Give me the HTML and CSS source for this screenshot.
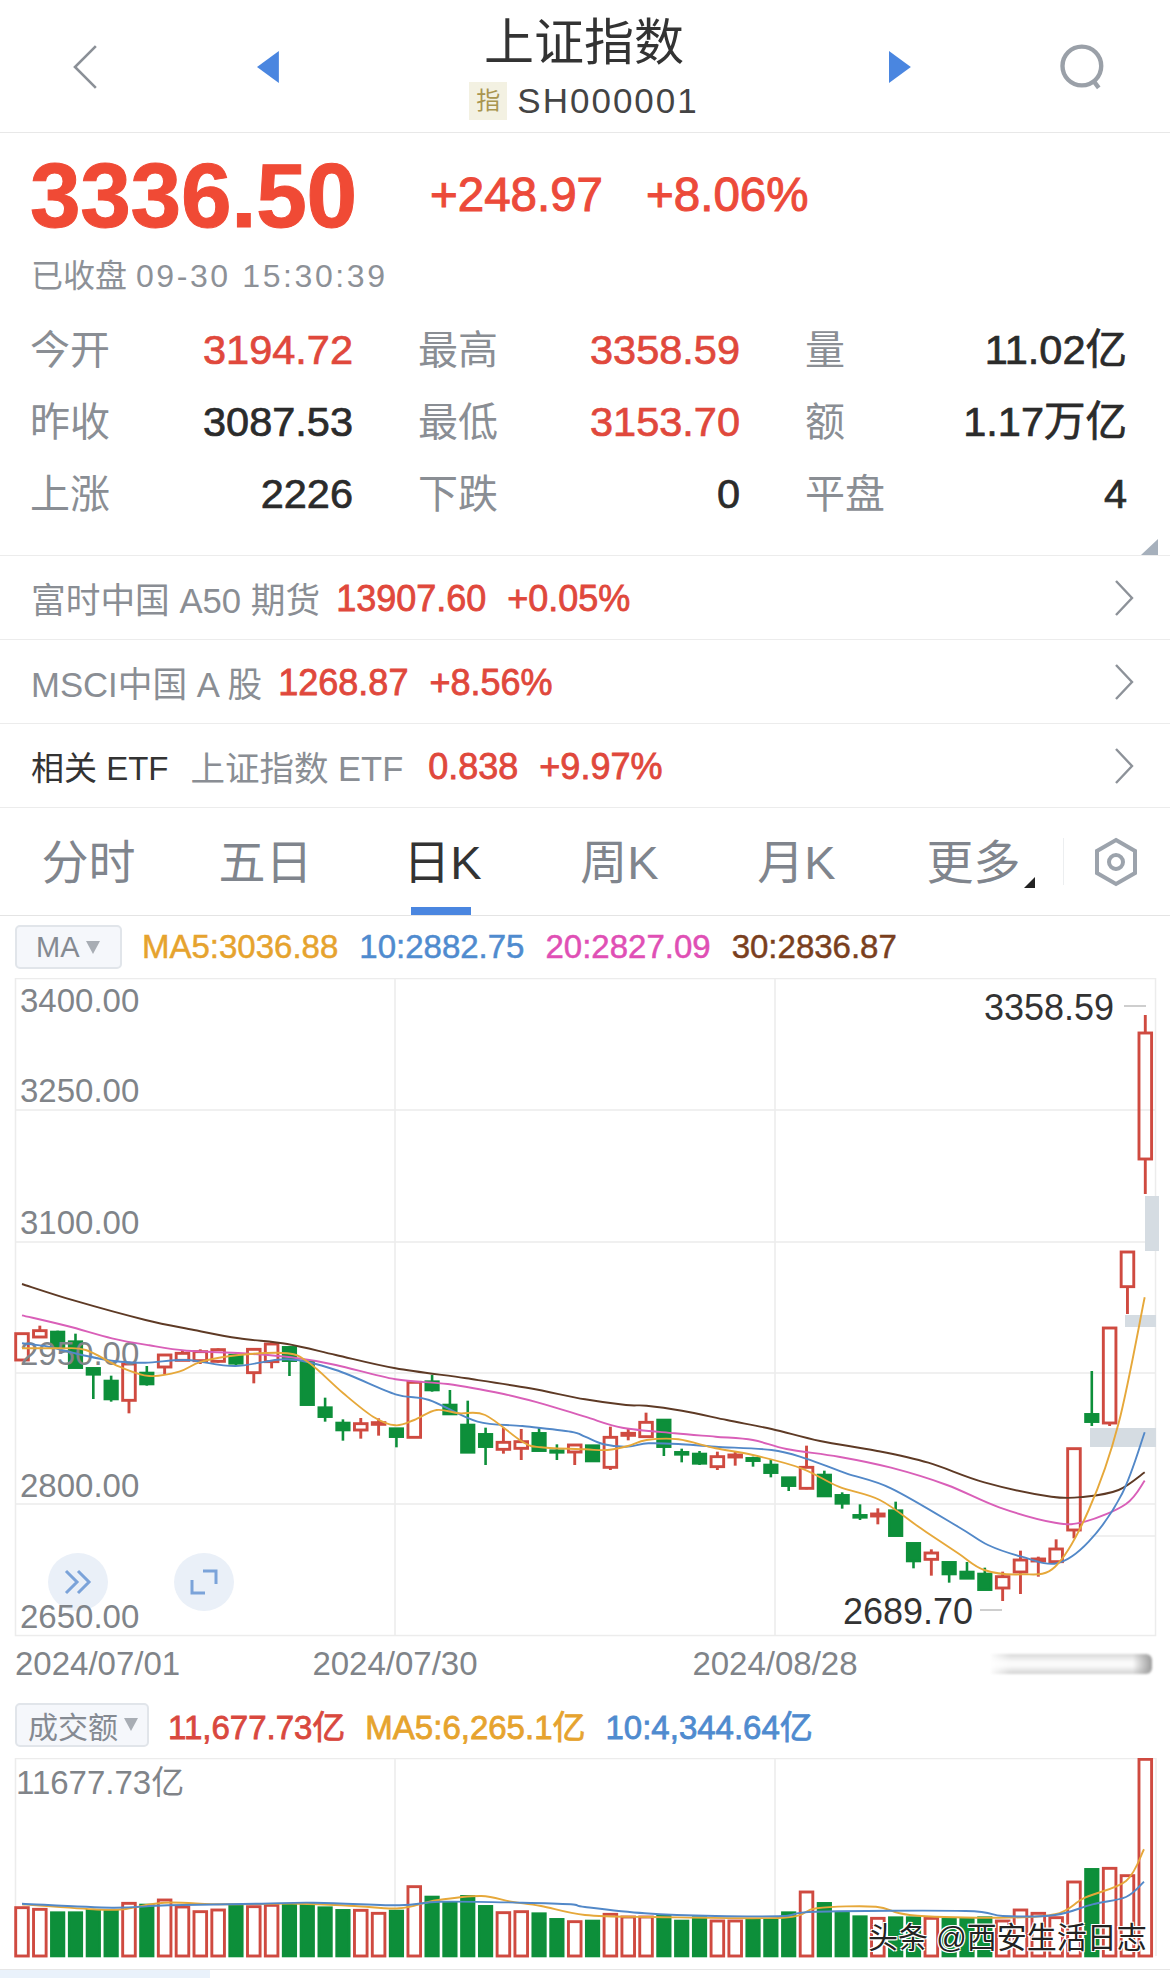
FILE: index.html
```html
<!DOCTYPE html>
<html lang="zh-CN">
<head>
<meta charset="utf-8">
<title>上证指数</title>
<link rel="stylesheet" href="styles.css">
</head>
<body>
<div class="page">
  <header class="header">
    <svg class="ic-back" viewBox="0 0 26 46"><path d="M24 2 3 23l21 21"/></svg>
    <svg class="ic-arrow" viewBox="0 0 22 32"><path d="M22 0v32L0 16z"/></svg>
    <div class="title-box">
      <div class="title">上证指数</div>
      <div class="code"><span class="tag">指</span><span class="code-text">SH000001</span></div>
    </div>
    <svg class="ic-arrow" viewBox="0 0 22 32"><path d="M0 0v32l22-16z"/></svg>
    <svg class="ic-search" viewBox="0 0 44 46"><circle cx="22" cy="22" r="19.5"/><path d="m33 36 6 8"/></svg>
  </header>

  <section class="quote">
    <div class="price-line">
      <span class="price">3336.50</span>
      <span class="chg">+248.97</span>
      <span class="chg">+8.06%</span>
    </div>
    <div class="status">已收盘 <span class="status-time">09-30 15:30:39</span></div>
    <div class="stats">
      <span class="lab">今开</span><span class="val up">3194.72</span>
      <span class="lab">最高</span><span class="val up">3358.59</span>
      <span class="lab">量</span><span class="val">11.02亿</span>
      <span class="lab">昨收</span><span class="val">3087.53</span>
      <span class="lab">最低</span><span class="val up">3153.70</span>
      <span class="lab">额</span><span class="val">1.17万亿</span>
      <span class="lab">上涨</span><span class="val">2226</span>
      <span class="lab">下跌</span><span class="val">0</span>
      <span class="lab">平盘</span><span class="val">4</span>
    </div>
    <span class="corner"></span>
  </section>

  <div class="row">
    <span class="row-name">富时中国 A50 期货</span><span class="row-num">13907.60</span><span class="row-num">+0.05%</span>
    <svg class="ic-next" viewBox="0 0 20 36"><path d="m2 1 16 17L2 35"/></svg>
  </div>
  <div class="row">
    <span class="row-name">MSCI中国 A 股</span><span class="row-num">1268.87</span><span class="row-num">+8.56%</span>
    <svg class="ic-next" viewBox="0 0 20 36"><path d="m2 1 16 17L2 35"/></svg>
  </div>
  <div class="row">
    <span class="row-head">相关 ETF</span><span class="row-name row-name-wide">上证指数 ETF</span><span class="row-num">0.838</span><span class="row-num">+9.97%</span>
    <svg class="ic-next" viewBox="0 0 20 36"><path d="m2 1 16 17L2 35"/></svg>
  </div>

  <nav class="tabs">
    <div class="tab">分时</div>
    <div class="tab">五日</div>
    <div class="tab active">日K</div>
    <div class="tab">周K</div>
    <div class="tab">月K</div>
    <div class="tab more">更多<span class="more-mark"></span></div>
    <div class="tab-set">
      <svg class="ic-hex" viewBox="0 0 44 50"><path d="M22 3 41 14v22L22 47 3 36V14z"/><circle cx="22" cy="25" r="7"/></svg>
    </div>
  </nav>

  <div class="legend legend-ma">
    <span class="pill pill-ma">MA<i class="pill-mark"></i></span>
    <span class="c-or">MA5:3036.88</span>
    <span class="c-bl">10:2882.75</span>
    <span class="c-pk">20:2827.09</span>
    <span class="c-br">30:2836.87</span>
  </div>

  <svg class="chart-k" viewBox="0 978 1170 659">
    <g class="grid">
      <rect x="15.5" y="978.5" width="1140" height="657"/>
      <path d="M15 1110h1141M15 1242h1141M15 1373h1141M15 1504h1141M1090 1536h66M395 978v658M775 978v658"/>
    </g>
    <g class="patch">
      <rect x="1145" y="1196" width="14" height="55"/>
      <rect x="1125" y="1315" width="31" height="12"/>
      <rect x="1090" y="1428" width="66" height="19"/>
    </g>
    <g class="round-btn">
      <ellipse cx="78" cy="1582" rx="30" ry="29"/>
      <ellipse cx="204" cy="1582" rx="30" ry="29"/>
      <path class="round-ic" d="m66 1571 11 11-11 11M78 1571l11 11-11 11M203 1571h13v13M205 1593h-13v-13"/>
    </g>
    <g id="candles"></g>
    <g class="axis">
      <text x="20" y="1012">3400.00</text>
      <text x="20" y="1102">3250.00</text>
      <text x="20" y="1234">3100.00</text>
      <text x="20" y="1365">2950.00</text>
      <text x="20" y="1497">2800.00</text>
      <text x="20" y="1628">2650.00</text>
    </g>
    <g id="ma-lines"></g>
    <g class="extreme">
      <text x="984" y="1020">3358.59</text>
      <text x="843" y="1624">2689.70</text>
      <path class="dash" d="M1124 1006h22M980 1610h22"/>
    </g>
  </svg>

  <div class="dates">
    <span class="date-a">2024/07/01</span>
    <span class="date-b">2024/07/30</span>
    <span class="date-c">2024/08/28</span>
    <span class="scroll-thumb"></span>
  </div>

  <div class="legend legend-vol">
    <span class="pill pill-vol">成交额<i class="pill-mark"></i></span>
    <span class="c-rd">11,677.73亿</span>
    <span class="c-or">MA5:6,265.1亿</span>
    <span class="c-bl">10:4,344.64亿</span>
  </div>

  <div class="vol-wrap">
    <svg class="chart-v" viewBox="0 1757 1170 211">
      <g class="grid">
        <path d="M15 1757.5h1141M15.5 1757v198M395 1757v198M775 1757v198M1156 1757v198"/>
      </g>
      <g id="vol-bars"></g>
      <g id="vol-lines"></g>
      <g class="axis"><text x="16" y="1793">11677.73亿</text></g>
    </svg>
    <span class="watermark">头条 @西安生活日志</span>
  </div>

  <footer class="foot"><span class="foot-tab"></span></footer>
</div>
<script src="chart.js"></script>
</body>
</html>
```

FILE: styles.css
```css
* { box-sizing: border-box; }
html, body { margin: 0; padding: 0; background: #fff; }
body {
  font-family: "Liberation Sans", "Noto Sans CJK SC", sans-serif;
  color: #333;
}
.page { width: 1170px; height: 1978px; overflow: hidden; }

/* header */
.header {
  height: 133px;
  border-bottom: 1px solid #e8e8e8;
  display: flex;
  align-items: center;
  padding: 0 66px 0 72px;
}
.ic-back { width: 26px; height: 46px; fill: none; stroke: #8b9097; stroke-width: 2.6; margin-top: 2px; }
.ic-arrow { width: 22px; height: 32px; fill: #4a86e0; margin-top: 2px; }
.ic-back + .ic-arrow { margin-left: 159px; }
.title-box { width: 615px; display: flex; flex-direction: column; align-items: center; }
.title { font-size: 50px; line-height: 50px; color: #333; margin-top: 5px; }
.code { display: flex; align-items: center; margin-top: 14px; margin-left: 0; }
.tag {
  width: 38px; height: 38px; background: #f3f1e2; color: #a9954f;
  font-size: 24px; line-height: 38px; text-align: center; margin-right: 10px;
}
.code-text { font-size: 35px; line-height: 38px; letter-spacing: 2px; color: #444; }
.ic-search { width: 44px; height: 46px; fill: none; stroke: #9aa0a8; stroke-width: 4.4; margin-left: 149px; margin-top: 2px; }

/* quote */
.quote { height: 423px; border-bottom: 1px solid #ececec; padding: 0 43px 0 30px; position: relative; }
.price-line { display: flex; align-items: center; height: 110px; padding-top: 12px; }
.price { font-size: 91px; font-weight: 700; letter-spacing: -0.3px; color: #f04a35; -webkit-text-stroke: 1px #f04a35; width: 400px; line-height: 90px; margin-top: 4px; }
.chg { font-size: 47.5px; color: #ec4a3a; -webkit-text-stroke: 1px #ec4a3a; margin-right: 43px; }
.status { font-size: 32px; color: #8d9197; line-height: 40px; margin-top: 13px; height: 40px; margin-left: 1px; }
.status-time { letter-spacing: 2.6px; }
.stats {
  display: grid;
  grid-template-columns: 101px 222px 145px 242px 145px 242px;
  grid-auto-rows: 72px;
  align-items: center;
  margin-top: 18px;
}
.lab { font-size: 40px; line-height: 48px; color: #8a8e94; white-space: nowrap; }
.lab:not(:nth-child(6n+1)) { padding-left: 65px; }
.val { font-size: 41.5px; line-height: 48px; text-align: right; color: #2b2b2b; -webkit-text-stroke: 0.7px currentColor; white-space: nowrap; }
.val.up { color: #e0483c; }
.corner {
  position: absolute; right: 12px; bottom: 0;
  border-style: solid; border-width: 0 0 16px 17px;
  border-color: transparent transparent #a6b0bc transparent;
}

/* rows */
.row {
  height: 84px; border-bottom: 1px solid #ececec; padding: 0 36px 0 31px;
  display: flex; align-items: center; position: relative;
}
.row-head { font-size: 33px; color: #333; margin-right: 22px; }
.row-name { font-size: 34.7px; color: #8a8e94; margin-right: 16px; }
.row-name-wide { font-size: 34.5px; margin-right: 25px; }
.row-num { font-size: 36px; color: #e0483c; -webkit-text-stroke: 0.8px #e0483c; margin-right: 21px; line-height: 44px; padding-top: 3px; }
.ic-next { width: 20px; height: 36px; fill: none; stroke: #8d9299; stroke-width: 2.4; margin-left: auto; }

/* tabs */
.tabs { height: 108px; border-bottom: 1px solid #e4e4e4; display: flex; }
.tab {
  width: 177px; height: 107px; font-size: 47px; line-height: 110px; text-align: center;
  color: #80858d; position: relative;
}
.tab.active { color: #333; }
.tab.active::after {
  content: ""; position: absolute; left: 57px; width: 60px; height: 8px; bottom: 0; background: #4a86e0;
}
.more-mark {
  position: absolute; left: 139px; top: 69px;
  border-style: solid; border-width: 0 0 11px 11px;
  border-color: transparent transparent #222 transparent;
}
.tab-set { flex: 1; display: flex; align-items: center; justify-content: flex-start; padding-left: 32px; position: relative; }
.tab-set::before { content: ""; position: absolute; left: 1px; top: 30px; height: 47px; width: 1px; background: #eceef0; }
.ic-hex { width: 44px; height: 50px; fill: none; stroke: #9ca3ac; stroke-width: 4; }

/* legends */
.legend { display: flex; align-items: center; white-space: nowrap; font-size: 33px; -webkit-text-stroke: 0.5px currentColor; }
.legend-ma { height: 62px; padding: 0 0 0 15px; gap: 21px; }
.legend-ma .pill { margin-right: -1px; }
.legend-vol { height: 57px; padding: 0 0 10px 15px; gap: 20px; -webkit-text-stroke: 0.8px currentColor; }
.pill {
  height: 44px; border: 2px solid #e1e5ea; border-radius: 5px; background: #f5f7fb;
  display: flex; align-items: center; color: #858a92; font-size: 29px; -webkit-text-stroke: 0;
}
.pill-ma { width: 107px; padding-left: 19px; }
.pill-vol { width: 134px; padding-left: 11px; margin-right: -1px; font-size: 30px; }
.pill-mark {
  margin-left: 6px; border-style: solid; border-width: 13px 7px 0 7px;
  border-color: #a8adb4 transparent transparent transparent;
}
.c-or { color: #e6a32e; }
.c-bl { color: #4f8bcf; }
.c-pk { color: #e04fb5; }
.c-br { color: #7a3f1e; }
.c-rd { color: #d9483e; }

/* charts */
.chart-k, .chart-v { display: block; width: 1170px; }
.chart-k { height: 659px; }
.chart-v { height: 211px; }
.grid { fill: none; stroke: #ececec; stroke-width: 1.5; }
.patch { fill: #d5dce2; }
.axis text { font-size: 33px; fill: #808489; font-family: "Liberation Sans", "Noto Sans CJK SC", sans-serif; }
.extreme text { font-size: 36px; fill: #333; font-family: "Liberation Sans", sans-serif; }
.dash { fill: none; stroke: #bfbfbf; stroke-width: 1.5; }
.round-btn ellipse { fill: #eaf0f8; }
.round-ic { fill: none; stroke: #7ba3d9; stroke-width: 3; }
.k-up { fill: none; stroke: #cf4a40; stroke-width: 2.9; }
.k-dn { fill: #0d8f3a; stroke: #0d8f3a; stroke-width: 2.6; }
.ma { fill: none; stroke-width: 1.9; stroke-linejoin: round; }
.ma-or { stroke: #e6a83a; }
.ma-bl { stroke: #5288c8; }
.ma-pk { stroke: #d95fb8; }
.ma-br { stroke: #5e3a25; }

.dates { height: 64px; position: relative; color: #808489; font-size: 33px; line-height: 54px; }
.dates span { position: absolute; top: 0; }
.date-a { left: 15px; }
.date-b { left: 395px; transform: translateX(-50%); }
.date-c { left: 775px; transform: translateX(-50%); }
.dates .scroll-thumb {
  left: 991px; top: 17px; width: 161px; height: 20px; border-radius: 0 6px 6px 0;
  background:
    linear-gradient(90deg, rgba(255,255,255,.9) 0, rgba(255,255,255,0) 12%, rgba(255,255,255,0) 88%, #9b9b9b 100%),
    linear-gradient(180deg, #d8d8d8 0, #fafafa 40%, #fafafa 60%, #d2d2d2 100%);
  filter: blur(1px);
}

.vol-wrap { height: 212px; border-bottom: 1px solid #e6e6e6; position: relative; }
.watermark {
  position: absolute; left: 868px; top: 160px; font-size: 30px; line-height: 40px; color: #222;
  white-space: nowrap; text-shadow: 1px 1px 0 #fff, -1px -1px 0 #fff, 1px -1px 0 #fff, -1px 1px 0 #fff;
}
.foot { height: 9px; }
.foot-tab { display: block; width: 210px; height: 9px; background: #eaf2fb; }
```

FILE: chart.js
```js
// Daily candles, traced in 1/3 px vertical units from y=1240: [dir, high, top, bottom, low]
var K = [
  ['u',281,281,360,360],['u',257,272,291,291],['d',272,276,320,325],['d',281,305,383,383],
  ['d',383,385,403,477],['d',407,423,477,485],['u',365,372,481,520],['d',378,399,432,437],
  ['u',345,345,381,403],['u',333,340,361,361],['u',328,335,362,372],['u',325,329,364,368],
  ['d',340,345,370,378],['u',325,328,398,430],['u',305,312,365,385],['d',318,322,362,408],
  ['d',362,365,494,494],['d',473,503,530,545],['d',538,549,570,602],['u',534,551,570,596],
  ['u',535,548,553,587],['d',566,566,590,622],['u',425,427,592,592],['d',405,425,450,455],
  ['d',450,495,522,522],['d',482,555,637,637],['d',563,583,620,675],['u',563,607,628,641],
  ['u',567,605,625,660],['d',562,580,632,632],['d',613,632,637,660],['u',613,615,636,675],
  ['d',617,617,663,663],['u',560,592,682,690],['u',565,580,586,601],['u',518,547,590,590],
  ['d',540,540,620,648],['d',626,637,643,667],['d',633,642,670,675],['u',635,650,680,690],
  ['u',635,645,651,677],['d',650,655,662,680],['d',658,675,698,712],['d',713,713,737,753],
  ['u',617,682,745,748],['d',692,705,768,768],['d',757,766,790,806],['d',793,826,832,840],
  ['u',805,822,828,853],['d',785,812,887,887],['d',910,910,963,985],['u',928,939,958,1007],
  ['d',967,967,1002,1028],['d',966,996,1015,1015],['d',983,1002,1049,1049],['u',995,1010,1044,1083],
  ['u',932,960,996,1062],['u',950,957,963,1010],['u',898,927,965,965],['u',626,626,870,895],
  ['d',393,523,545,558],['u',264,264,549,558],['u',36,36,140,222],['u',-675,-621,-243,-138]
];

// Volume bar tops, in 1/3 px units from y=1660 (baseline 885).
var V = [740,745,755,755,748,750,727,732,717,738,752,747,735,737,733,730,730,740,748,748,757,750,677,708,
  725,706,736,755,752,758,775,782,780,760,768,768,765,780,770,780,780,777,777,755,693,727,757,767,
  772,770,770,772,775,775,770,780,747,757,770,663,625,622,644,295];

var NS = 'http://www.w3.org/2000/svg';
var L = function (x) { return x / 2.68; };
var R = function (x) { return 585 + x / 2.68; };
var kx = function (i) { return 22 + 17.83 * i; };
var ky = function (y) { return 1240 + y / 3; };
var vy = function (y) { return 1660 + y / 3; };

function add(parent, name, attrs) {
  var el = document.createElementNS(NS, name);
  for (var k in attrs) el.setAttribute(k, attrs[k]);
  parent.appendChild(el);
  return el;
}

// Catmull-Rom smoothing through the traced points.
function smooth(pts) {
  var d = 'M' + pts[0][0].toFixed(1) + ' ' + pts[0][1].toFixed(1);
  for (var i = 0; i < pts.length - 1; i++) {
    var p0 = pts[Math.max(i - 1, 0)], p1 = pts[i], p2 = pts[i + 1], p3 = pts[Math.min(i + 2, pts.length - 1)];
    d += 'C' + (p1[0] + (p2[0] - p0[0]) / 6).toFixed(1) + ' ' + (p1[1] + (p2[1] - p0[1]) / 6).toFixed(1) +
      ' ' + (p2[0] - (p3[0] - p1[0]) / 6).toFixed(1) + ' ' + (p2[1] - (p3[1] - p1[1]) / 6).toFixed(1) +
      ' ' + p2[0].toFixed(1) + ' ' + p2[1].toFixed(1);
  }
  return d;
}

function line(parent, cls, left, right, yf) {
  var pts = left.map(function (p) { return [L(p[0]), yf(p[1])]; })
    .concat(right.map(function (p) { return [R(p[0]), yf(p[1])]; }));
  add(parent, 'path', { 'class': 'ma ' + cls, d: smooth(pts) });
}

var gk = document.getElementById('candles');
K.forEach(function (c, i) {
  var x = kx(i), cls = c[0] === 'u' ? 'k-up' : 'k-dn';
  var hi = ky(c[1]), t = ky(c[2]), b = ky(c[3]), lo = ky(c[4]);
  if (t - hi > 0.5) add(gk, 'line', { 'class': cls, x1: x, x2: x, y1: hi, y2: t });
  if (lo - b > 0.5) add(gk, 'line', { 'class': cls, x1: x, x2: x, y1: b, y2: lo });
  add(gk, 'rect', { 'class': cls, x: x - 6.3, y: t, width: 12.6, height: Math.max(b - t, 1.5) });
});

var gm = document.getElementById('ma-lines');
line(gm, 'ma-br',
  [[59,132],[200,182],[390,240],[520,270],[640,295],[770,312],[900,345],[1060,385],[1250,415],[1420,445]],
  [[0,478],[110,495],[165,497],[260,512],[380,540],[500,567],[630,603],[780,632],[920,668],[1070,727],[1250,770],[1340,770],[1430,750],[1500,697]], ky);
line(gm, 'ma-pk',
  [[59,226],[180,258],[300,295],[400,316],[500,332],[650,340],[780,352],[900,375],[1060,418],[1200,432],[1350,462],[1450,490]],
  [[0,530],[100,563],[240,580],[350,590],[450,600],[540,627],[680,650],[820,683],[970,735],[1110,802],[1260,848],[1340,845],[1450,792],[1500,722]], ky);
line(gm, 'ma-bl',
  [[59,310],[130,320],[220,345],[300,362],[390,368],[500,360],[630,378],[770,358],[900,390],[1060,463],[1150,480],[1280,545],[1400,558],[1530,575]],
  [[0,590],[50,613],[110,620],[170,610],[250,612],[350,620],[500,630],[590,655],[700,700],[820,745],[1000,860],[1080,915],[1170,950],[1265,970],[1350,905],[1440,760],[1500,577]], ky);
line(gm, 'ma-or',
  [[59,325],[160,325],[230,330],[320,380],[400,408],[480,395],[540,365],[640,345],[770,340],[830,370],[920,460],[1000,530],[1060,556],[1110,540],[1170,510],[1230,520],[1300,525],[1400,605],[1450,622]],
  [[0,628],[60,630],[115,618],[165,600],[250,598],[350,625],[450,645],[580,685],[680,740],[790,780],[900,865],[1000,940],[1070,990],[1170,1003],[1260,980],[1350,810],[1430,550],[1500,172]], ky);

var gv = document.getElementById('vol-bars');
V.forEach(function (top, i) {
  var x = kx(i), cls = K[i][0] === 'u' ? 'k-up' : 'k-dn';
  add(gv, 'rect', { 'class': cls, x: x - 6.3, y: vy(top), width: 12.6, height: 1955 - vy(top) });
});

var gl = document.getElementById('vol-lines');
line(gl, 'ma-or',
  [[59,730],[250,745],[330,745],[440,725],[600,730],[800,728],[950,735],[1070,742],[1170,718],[1290,705],[1370,722],[1450,735]],
  [[0,762],[180,768],[530,770],[620,742],[780,737],[870,762],[1100,770],[1260,760],[1340,710],[1450,660],[1498,565]], vy);
line(gl, 'ma-bl',
  [[59,728],[300,740],[450,733],[700,728],[840,725],[1070,733],[1180,722],[1400,725],[1530,730]],
  [[0,738],[160,757],[350,765],[530,765],[620,752],[1020,750],[1120,765],[1260,762],[1360,730],[1450,708],[1498,662]], vy);
```
